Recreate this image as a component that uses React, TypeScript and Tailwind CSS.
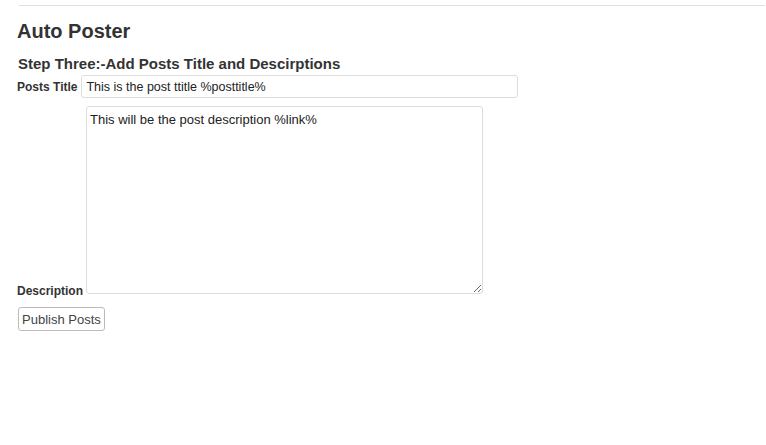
import React from "react";

export default function App() {
  return (
    <div
      className="w-[766px] h-[445px] bg-white text-[#333]"
      style={{ fontFamily: '"Liberation Sans", Arial, sans-serif' }}
    >
      <div className="pt-[5px]">
        <div className="ml-[19px] mr-[1px] h-px bg-[#dfdfdf]" />
      </div>
      <div className="pl-[17px]">
        <h2 className="mt-[12px] text-[20px] leading-[26px] font-bold text-[#333]">Auto Poster</h2>
        <h3 className="mt-[11px] ml-[1px] text-[15px] leading-[18px] font-bold text-[#333]">
          Step Three:-Add Posts Title and Descirptions
        </h3>
        <div className="mt-[2px] flex items-center">
          <label className="text-[12px] leading-[14px] font-bold text-[#333]">Posts Title</label>
          <input
            type="text"
            defaultValue="This is the post ttitle %posttitle%"
            className="ml-[4px] w-[437px] h-[23px] border border-[#dddddd] rounded-[3px] px-[4px] text-[12.5px] text-[#222] bg-white outline-none"
          />
        </div>
        <div className="mt-[8px] flex items-end">
          <label className="mb-[-3px] text-[12px] leading-[14px] font-bold text-[#333]">Description</label>
          <textarea
            defaultValue="This will be the post description %link%"
            className="ml-[3px] mb-[1px] w-[397px] h-[188px] border border-[#dddddd] rounded-[3px] px-[3px] pt-[5px] text-[13px] leading-[15px] text-[#222] bg-white outline-none"
          />
        </div>
        <button className="mt-[12px] ml-[1px] h-[24px] px-[3px] border border-[#bbbbbb] rounded-[3px] bg-white text-[13px] leading-[15px] text-[#444]">
          Publish Posts
        </button>
      </div>
    </div>
  );
}
